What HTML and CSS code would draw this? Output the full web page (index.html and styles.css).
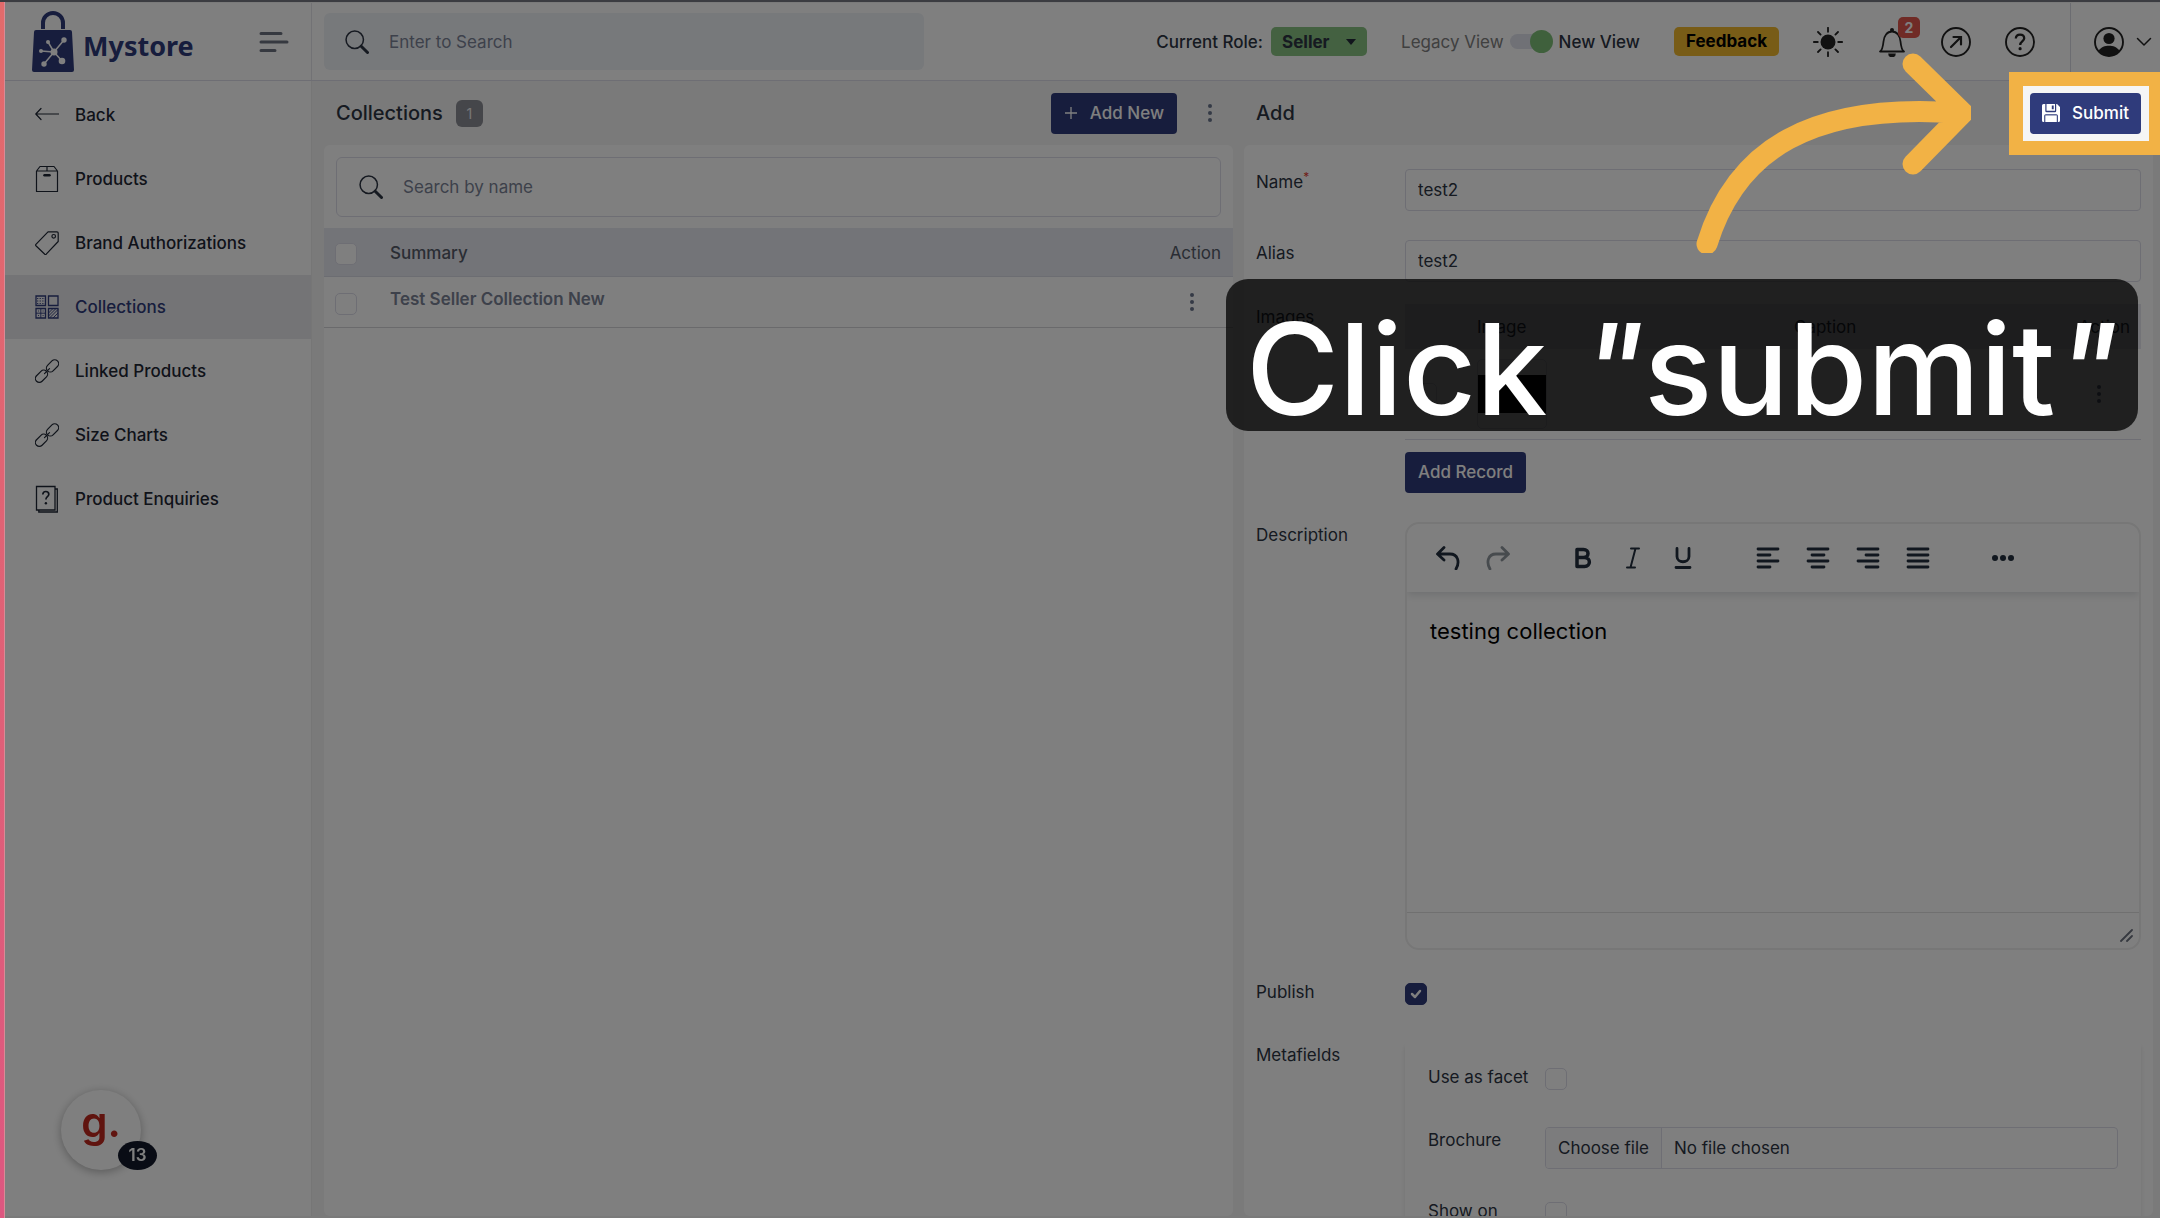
FILE: index.html
```html
<!DOCTYPE html>
<html lang="en">
<head>
    <meta charset="UTF-8">
    <meta name="viewport" content="width=device-width, initial-scale=1.0">
    <title>Mystore - Collections</title>
    <link rel="stylesheet" href="styles.css">
</head>
<body>
    <svg class="defs" aria-hidden="true">
        <symbol id="i-search" viewBox="0 0 16 16">
            <circle cx="6.5" cy="6.5" r="5.8" fill="none" stroke="currentColor"/>
            <path d="M10.8 10.8 15 15" fill="none" stroke="currentColor" stroke-width="2" stroke-linecap="round"/>
        </symbol>
        <symbol id="i-dots" viewBox="0 0 6 20">
            <circle cx="3" cy="3" r="2"/><circle cx="3" cy="10" r="2"/><circle cx="3" cy="17" r="2"/>
        </symbol>
        <symbol id="i-link" viewBox="0 0 24 24">
            <g fill="none" stroke="currentColor" stroke-width="1.2" stroke-linecap="round">
                <rect x="10.500" y="3" width="14" height="7.800" rx="3.900" transform="rotate(-45 17.500 6.900)"/>
                <rect x="-.5" y="13.400" width="14" height="7.800" rx="3.900" transform="rotate(-45 6.500 17.300)"/>
                <path d="m9.500 14.600 5-5"/>
            </g>
        </symbol>
    </svg>

    <header class="topbar">
        <div class="brand">
            <a href="#" class="logo">
                <svg width="44" height="62" viewBox="0 0 44 62" aria-hidden="true">
                    <path d="M12 18v-6a10 10 0 0 1 20 0v6" fill="none" stroke="#2f3b7b" stroke-width="4"/>
                    <path d="M5 19h34q2 0 2 2l2 38q0 2-2 2H3q-2 0-2-2l2-38q0-2 2-2z" fill="#2f3b7b"/>
                    <g stroke="#fff" stroke-width="1.500"><path d="M23 41 17 31M23 41 33 29M23 41 10 40M23 41 13 53M23 41 31 50"/></g>
                    <g fill="#fff"><circle cx="23" cy="41" r="3.500"/><circle cx="17" cy="31" r="2"/><circle cx="33" cy="29" r="2.700"/><circle cx="10" cy="40" r="2"/><circle cx="13" cy="53" r="2.700"/><circle cx="31" cy="50" r="3.300"/></g>
                </svg>
                <span>Mystore</span>
            </a>
            <button class="icon-btn menu-btn" aria-label="Toggle menu">
                <svg width="30" height="22" viewBox="0 0 30 22" stroke="currentColor" stroke-width="3" stroke-linecap="round"><path d="M2 2.500h20M2 11h26M2 19.500h14"/></svg>
            </button>
        </div>
        <div class="top-main">
            <label class="top-search">
                <svg width="24" height="24"><use href="#i-search"/></svg>
                <input type="text" placeholder="Enter to Search" aria-label="Enter to Search">
            </label>
            <div class="top-tools">
                <div class="role">
                    <label for="role">Current Role:</label>
                    <select id="role"><option>Seller</option></select>
                </div>
                <label class="view-switch">
                    <span class="legacy">Legacy View</span>
                    <input type="checkbox" class="switch" checked>
                    <span>New View</span>
                </label>
                <button class="feedback">Feedback</button>
                <div class="top-icons">
                    <button class="icon-btn" aria-label="Theme">
                        <svg width="30" height="30" viewBox="0 0 30 30"><circle cx="15" cy="15" r="7.500" fill="currentColor"/><path d="M15 .8v4M15 25.200v4M.8 15h4M25.200 15h4M5 5l2.600 2.600M22.400 22.400 25 25M5 25l2.600-2.600M22.400 7.600 25 5" stroke="currentColor" stroke-width="1.800" stroke-linecap="round"/></svg>
                    </button>
                    <button class="icon-btn bell" aria-label="Notifications">
                        <svg width="30" height="30" viewBox="0 0 30 30"><path d="M3 24.500h24c-2.500-1.500-3-5-3.500-10-.4-5.500-3.500-10-8.500-10s-8.100 4.500-8.500 10c-.5 5-1 8.500-3.500 10z" fill="none" stroke="currentColor" stroke-width="1.800" stroke-linejoin="round"/><path d="M11.200 26.500h7.600a3.800 3.800 0 0 1-7.600 0z" fill="currentColor"/><circle cx="15" cy="3" r="2" fill="currentColor"/></svg>
                        <span class="bell-count">2</span>
                    </button>
                    <button class="icon-btn" aria-label="Open store">
                        <svg width="30" height="30" viewBox="0 0 30 30" fill="none" stroke="currentColor" stroke-width="1.900" stroke-linecap="round"><circle cx="15" cy="15" r="14"/><path d="m10 20 9.500-9.500M12.500 10h7.500v7.500" stroke-width="2.200"/></svg>
                    </button>
                    <button class="icon-btn" aria-label="Help">
                        <svg width="30" height="30" viewBox="0 0 30 30" fill="none" stroke="currentColor" stroke-width="1.900"><circle cx="15" cy="15" r="14"/><path d="M10.800 11.500c.2-2.400 1.800-3.800 4.200-3.800s4.200 1.400 4.200 3.600c0 3.200-4 3.200-4 6.700" stroke-width="2.300"/><circle cx="15.100" cy="21.700" r="1.600" fill="currentColor" stroke="none"/></svg>
                    </button>
                </div>
            </div>
            <button class="icon-btn account" aria-label="Account">
                <svg width="30" height="30" viewBox="0 0 30 30"><circle cx="15" cy="15" r="14" fill="none" stroke="currentColor" stroke-width="1.900"/><circle cx="15" cy="11.500" r="5.600" fill="currentColor"/><path d="M4.500 24C7 20 11 18.800 15 18.800s8 1.200 10.500 5.200A14 14 0 0 1 15 29a14 14 0 0 1-10.500-5z" fill="currentColor"/></svg>
                <svg width="16" height="10" viewBox="0 0 16 10" fill="none" stroke="currentColor" stroke-width="1.500" stroke-linecap="round" stroke-linejoin="round"><path d="m1.500 1.500 6.500 6.500 6.500-6.500"/></svg>
            </button>
        </div>
    </header>

    <div class="layout">
        <nav class="sidebar">
            <a href="#"><svg width="24" height="24" viewBox="0 0 24 24" fill="none" stroke="currentColor" stroke-width="1.200" stroke-linecap="round" stroke-linejoin="round"><path d="M23.500 11H.8M6 5.500.8 11 6 16.500"/></svg>Back</a>
            <a href="#"><svg width="24" height="28" viewBox="0 0 24 28" fill="none" stroke="currentColor" stroke-width="1.200" stroke-linejoin="round"><path d="M1.500 6h21v20.500h-21zM1.500 6 5 1.500h14L22.500 6M12 1.500V6"/><path d="M9.500 10.200h5" stroke-width="2.500" stroke-linecap="round"/></svg>Products</a>
            <a href="#"><svg width="24" height="24" viewBox="0 0 24 24" fill="none" stroke="currentColor" stroke-width="1.200" stroke-linejoin="round"><path d="M13 .8h9q1.200 0 1.200 1.200v8.500L11.200 23.200q-.7.600-1.400 0L.9 14.700q-.6-.7 0-1.400z"/><circle cx="18.700" cy="5.300" r="1.800"/></svg>Brand Authorizations</a>
            <a href="#" class="active"><svg width="24" height="24" viewBox="0 0 24 24" fill="none" stroke="currentColor" stroke-width="1.300"><path d="M1 1h9.500v9.500H1zM13.500 1H23v9.500h-9.500zM1 13.500h9.500V23H1zM13.500 13.500H23V23h-9.500z"/><g stroke-width=".9"><path d="M2 3.500h8M2 6h8M2 8.500h8" stroke-dasharray="1.300 1.300"/><path d="M1 18.200h9.500M5.800 13.500V23M3 16h1M7.600 16h1M3 20.500h1M7.600 20.500h1M13.500 18l4.500-4.500M13.500 21l7.500-7.500M14.500 23l8.500-8.500M18 23l5-5"/></g></svg>Collections</a>
            <a href="#"><svg width="24" height="24"><use href="#i-link"/></svg>Linked Products</a>
            <a href="#"><svg width="24" height="24"><use href="#i-link"/></svg>Size Charts</a>
            <a href="#"><svg width="24" height="28" viewBox="0 0 24 28" fill="none" stroke="currentColor" stroke-width="1.300"><path d="M1.500 1.500h18.500v23.500H1.500zM20 4h2.300v23H3.800v-2"/><path d="M7.800 9.500c.1-1.900 1.200-3 3-3s3 1.100 3 2.700c0 2.500-2.900 2.600-2.900 5.300" stroke-width="1.700"/><circle cx="10.900" cy="18.300" r="1.200" fill="currentColor" stroke="none"/></svg>Product Enquiries</a>
        </nav>

        <main class="content">
            <section class="pane">
                <div class="pane-head">
                    <h1>Collections</h1>
                    <span class="count">1</span>
                    <button class="btn push"><svg width="14" height="14" viewBox="0 0 14 14" stroke="currentColor" stroke-width="1.300"><path d="M7 1v12M1 7h12"/></svg>Add New</button>
                    <button class="icon-btn dots" aria-label="More"><svg width="6" height="20" fill="currentColor"><use href="#i-dots"/></svg></button>
                </div>
                <div class="card">
                    <label class="list-search">
                        <svg width="24" height="24"><use href="#i-search"/></svg>
                        <input type="text" placeholder="Search by name" aria-label="Search by name">
                    </label>
                    <table class="list">
                        <thead>
                            <tr>
                                <th class="pick"><input type="checkbox" class="check" aria-label="Select all"></th>
                                <th>Summary</th>
                                <th class="act">Action</th>
                            </tr>
                        </thead>
                        <tbody>
                            <tr>
                                <td class="pick"><input type="checkbox" class="check" aria-label="Select row"></td>
                                <td class="name">Test Seller Collection New</td>
                                <td class="act"><button class="icon-btn dots" aria-label="Row actions"><svg width="6" height="20" fill="currentColor"><use href="#i-dots"/></svg></button></td>
                            </tr>
                        </tbody>
                    </table>
                </div>
            </section>

            <section class="pane">
                <div class="pane-head">
                    <h2>Add</h2>
                    <button class="btn push submit"><svg width="18" height="18" viewBox="0 0 18 18" fill="currentColor"><path d="M1.500 0h1.800v7q0 1.300 1.300 1.300h8.300q1.300 0 1.300-1.300V0h.8L18 3v13.500q0 1.500-1.500 1.500h-.6v-6.200q0-1.600-1.600-1.600H3.800q-1.600 0-1.600 1.600V18h-.7Q0 18 0 16.500v-15Q0 0 1.500 0z"/><path d="M4.500 0h8.500v6.800H4.500zm5.300 1.500v3.800h1.900V1.500z" fill-rule="evenodd"/><path d="M3.300 11.400h11.500V18H3.300z"/></svg>Submit</button>
                </div>
                <form class="card form">
                    <div class="row">
                        <label for="name">Name<sup>*</sup></label>
                        <input id="name" class="text" type="text" value="test2">
                    </div>
                    <div class="row tight">
                        <label for="alias">Alias</label>
                        <input id="alias" class="text" type="text" value="test2">
                    </div>
                    <div class="row">
                        <span class="label">Images</span>
                        <div>
                            <table class="images">
                                <thead>
                                    <tr><th class="pick"></th><th>Image</th><th>Caption</th><th class="act">Action</th></tr>
                                </thead>
                                <tbody>
                                    <tr>
                                        <td class="pick"><input type="checkbox" class="check" aria-label="Select image"></td>
                                        <td><div class="thumb"><div class="thumb-pic"></div></div></td>
                                        <td></td>
                                        <td class="act"><button type="button" class="icon-btn dots" aria-label="Image actions"><svg width="6" height="20" fill="currentColor"><use href="#i-dots"/></svg></button></td>
                                    </tr>
                                </tbody>
                            </table>
                            <button type="button" class="btn">Add Record</button>
                        </div>
                    </div>
                    <div class="row">
                        <label for="desc">Description</label>
                        <div class="editor">
                            <div class="toolbar">
                                <div class="group">
                                    <button type="button" aria-label="Undo"><svg width="24" height="24" viewBox="0 0 24 24"><path d="M8 1.500 1.500 8 8 14M1.800 8H14c8 0 10 8 6 15"/></svg></button>
                                    <button type="button" aria-label="Redo" disabled><svg width="24" height="24" viewBox="0 0 24 24"><path d="M16 1.500 22.500 8 16 14M22.200 8H10C2 8 0 16 4 23"/></svg></button>
                                </div>
                                <div class="group">
                                    <button type="button" aria-label="Bold"><svg width="20" height="22" viewBox="0 0 20 22"><path d="M4 2.500h6.500c6 0 6 8 0 8H4zM4 10.500h7.500c6.500 0 6.500 9 0 9H4z" stroke-width="3.500"/></svg></button>
                                    <button type="button" aria-label="Italic"><svg width="16" height="22" viewBox="0 0 16 22"><path d="M6 1.500h8M2 20.500h8M10.500 1.500 5.500 20.500" stroke-width="2"/></svg></button>
                                    <button type="button" aria-label="Underline"><svg width="18" height="22" viewBox="0 0 18 22"><path d="M3 1.500v8c0 7 12 7 12 0v-8M2 20.500h14"/></svg></button>
                                </div>
                                <div class="group">
                                    <button type="button" aria-label="Align left"><svg width="24" height="22" viewBox="0 0 24 22"><path d="M2 2h20M2 8h12M2 14h20M2 20h12"/></svg></button>
                                    <button type="button" aria-label="Align center"><svg width="24" height="22" viewBox="0 0 24 22"><path d="M2 2h20M6 8h12M2 14h20M6 20h12"/></svg></button>
                                    <button type="button" aria-label="Align right"><svg width="24" height="22" viewBox="0 0 24 22"><path d="M2 2h20M10 8h12M2 14h20M10 20h12"/></svg></button>
                                    <button type="button" aria-label="Justify"><svg width="24" height="22" viewBox="0 0 24 22"><path d="M2 2h20M2 8h20M2 14h20M2 20h20"/></svg></button>
                                </div>
                                <div class="group">
                                    <button type="button" aria-label="More"><svg width="24" height="8" viewBox="0 0 24 8"><path d="M4 4h.01M12 4h.01M20 4h.01" stroke-width="6"/></svg></button>
                                </div>
                            </div>
                            <textarea id="desc">testing collection</textarea>
                            <div class="statusbar"><svg width="14" height="14" viewBox="0 0 14 14" stroke="currentColor" stroke-width="1.800" stroke-linecap="round"><path d="M2 13 13 2M8 13l5-5"/></svg></div>
                        </div>
                    </div>
                    <div class="row loose">
                        <label for="publish">Publish</label>
                        <input id="publish" type="checkbox" class="check" checked>
                    </div>
                    <div class="row">
                        <span class="label">Metafields</span>
                        <div class="meta">
                            <div class="row loose">
                                <label for="facet">Use as facet</label>
                                <input id="facet" type="checkbox" class="check">
                            </div>
                            <div class="row">
                                <label for="brochure">Brochure</label>
                                <label class="file">
                                    <input id="brochure" type="file">
                                    <span class="file-btn">Choose file</span>
                                    <span class="file-name">No file chosen</span>
                                </label>
                            </div>
                            <div class="row">
                                <label for="showon">Show on</label>
                                <input id="showon" type="checkbox" class="check">
                            </div>
                        </div>
                    </div>
                </form>
            </section>
        </main>
    </div>

    <button class="chat" aria-label="Open chat">
        g.
        <span class="chat-count">13</span>
    </button>

    <!-- tour step: dims everything except the submit button -->
    <div class="spotlight"></div>
    <svg class="tour-arrow" width="280" height="208" viewBox="0 0 280 208" fill="none" stroke="#f2b245" stroke-width="21" stroke-linecap="round" stroke-linejoin="round" aria-hidden="true">
        <path d="M16 199C45 105 120 57 268 68M222 19l50 49-50 51"/>
    </svg>
    <div class="tour-text">Click <i>"</i>submit<i>"</i></div>
    <div class="edge"></div>
</body>
</html>
```
FILE: styles.css
```css
* {
    box-sizing: border-box;
}

body {
    margin: 0;
    height: 100vh;
    overflow: hidden;
    display: flex;
    flex-direction: column;
    padding: 3px 0 2px 4px;
    font-family: Inter, "Liberation Sans", sans-serif;
    font-size: 17px;
    line-height: 26px;
    color: #2c3443;
    background: #f5f5f5;
    position: relative;
}

button, input, select, textarea {
    font: inherit;
    color: inherit;
}

button {
    cursor: pointer;
}

svg {
    flex: none;
}

.defs {
    position: absolute;
    width: 0;
    height: 0;
}

.icon-btn {
    display: flex;
    align-items: center;
    padding: 0;
    border: none;
    background: none;
}

.dots {
    color: #69748c;
}

/* header */
.topbar {
    display: flex;
    flex: none;
    height: 78px;
    background: white;
    border-bottom: 1px solid #dcdce8;
}

.brand {
    display: flex;
    align-items: center;
    justify-content: space-between;
    width: 308px;
    padding: 0 22px 0 27px;
    border-right: 1px solid #e4e4ea;
}

.logo {
    display: flex;
    align-items: center;
    gap: 8px;
    color: #2f3b7b;
    font-family: "Noto Sans", sans-serif;
    font-size: 27px;
    font-weight: 700;
    text-decoration: none;
}

.logo span {
    padding-top: 8px;
}

.menu-btn {
    color: #6d7280;
}

.top-main {
    display: flex;
    flex: 1;
    align-items: center;
    padding-left: 12px;
}

.top-search {
    display: flex;
    align-items: center;
    gap: 20px;
    width: 600px;
    height: 57px;
    padding: 0 21px;
    border-radius: 6px;
    background: #eff2f6;
}

.top-search input, .list-search input {
    flex: 1;
    border: none;
    background: none;
    padding: 0;
    outline: none;
}

input::placeholder {
    color: #7b8396;
    opacity: 1;
}

.top-tools {
    display: flex;
    align-items: center;
    justify-content: flex-end;
    gap: 34px;
    flex: 1;
    padding-right: 35px;
    font-weight: 500;
}

.role {
    display: flex;
    align-items: center;
    gap: 8px;
}

.role select {
    appearance: none;
    width: 96px;
    height: 29px;
    padding: 0 11px;
    border: none;
    border-radius: 5px;
    font-weight: 700;
    background: #89c282 url("data:image/svg+xml,%3Csvg xmlns='http://www.w3.org/2000/svg' width='10' height='6'%3E%3Cpath d='M0 0h10L5 6z' fill='%23222a38'/%3E%3C/svg%3E") no-repeat right 11px center;
}

.view-switch {
    display: flex;
    align-items: center;
    gap: 6px;
}

.legacy {
    color: #808080;
    font-weight: 400;
}

.switch {
    appearance: none;
    width: 43px;
    height: 15px;
    margin: 0;
    border-radius: 8px;
    background: linear-gradient(to right, #e0e2ec 36px, transparent 36px);
    display: flex;
    align-items: center;
    justify-content: flex-end;
}

.switch::after {
    content: "";
    width: 23px;
    height: 23px;
    flex: none;
    border-radius: 50%;
    background: #7fc079;
}

.feedback {
    height: 29px;
    padding: 0 12px;
    border: none;
    border-radius: 5px;
    background: #f0b92f;
    color: black;
    font-weight: 700;
    line-height: 29px;
}

.top-icons {
    display: flex;
    gap: 34px;
}

.bell {
    position: relative;
}

.bell-count {
    position: absolute;
    top: -10px;
    left: 21px;
    width: 22px;
    height: 21px;
    border-radius: 5px;
    background: #e0564c;
    color: white;
    font-size: 14px;
    font-weight: 700;
    line-height: 21px;
}

.account {
    align-self: stretch;
    gap: 12px;
    padding: 0 8px 0 23px;
    border-left: 1px solid #d6d8e2;
}

.top-icons, .account {
    color: #222222;
}

/* sidebar */
.layout {
    display: flex;
    flex: 1;
    min-height: 0;
}

.sidebar {
    width: 308px;
    flex: none;
    padding-top: 2px;
    background: white;
    border-right: 1px solid #ececec;
}

.sidebar a {
    display: flex;
    align-items: center;
    gap: 16px;
    height: 64px;
    padding-left: 31px;
    color: #1f2735;
    font-weight: 500;
    text-decoration: none;
}

.sidebar a.active {
    background: #e8e8ec;
    color: #2f3b7b;
}

/* panes */
.content {
    display: flex;
    flex: 1;
    gap: 11px;
    padding: 0 7px 0 12px;
}

.pane {
    display: flex;
    flex-direction: column;
    flex: 1;
    min-width: 0;
}

.pane-head {
    display: flex;
    align-items: center;
    flex: none;
    height: 64px;
    padding: 0 12px;
}

.pane-head h1, .pane-head h2 {
    margin: 0;
    font-size: 20px;
    font-weight: 500;
}

.count {
    width: 27px;
    height: 27px;
    margin-left: 13px;
    border-radius: 6px;
    background: #8b8c94;
    color: #eeeeee;
    font-size: 14px;
    line-height: 27px;
    text-align: center;
}

.push {
    margin-left: auto;
}

.pane-head .dots {
    margin: 0 8px 0 30px;
}

.btn {
    display: flex;
    align-items: center;
    gap: 12px;
    height: 41px;
    padding: 0 13px;
    border: none;
    border-radius: 4px;
    background: #2f3b7b;
    color: white;
    font-weight: 500;
}

.btn.submit {
    padding: 0 12px;
}

.card {
    flex: 1;
    min-height: 0;
    overflow: hidden;
    border-radius: 6px;
    background: white;
}

/* collection list */
.list-search {
    display: flex;
    align-items: center;
    gap: 20px;
    height: 60px;
    margin: 12px 12px 11px;
    padding: 0 22px;
    border: 1px solid #dcdce8;
    border-radius: 6px;
}

table {
    width: 100%;
    border-collapse: collapse;
}

th, td {
    padding: 0;
    text-align: left;
    font-weight: 400;
}

.list th {
    height: 48px;
    padding-top: 2px;
    background: #e6e8f0;
    border-bottom: 1px solid #d8dae4;
    color: #555b68;
    font-weight: 500;
}

.list th:last-child {
    font-weight: 400;
}

.list td {
    height: 51px;
    border-bottom: 1px solid #d4d4d8;
}

.list .pick {
    width: 66px;
    padding: 4px 0 0 11px;
}

.list .name {
    padding-bottom: 6px;
    color: #7b8396;
    font-weight: 600;
}

.list .act {
    width: 90px;
    padding-right: 12px;
    text-align: right;
}

.list td .dots {
    margin-left: 46px;
}

.check {
    appearance: none;
    display: block;
    width: 22px;
    height: 22px;
    margin: 0;
    border: 1px solid #dcdce8;
    border-radius: 5px;
    background: white;
}

.check:checked {
    border-color: #2f3b7b;
    background: #2f3b7b url("data:image/svg+xml,%3Csvg xmlns='http://www.w3.org/2000/svg' width='12' height='10'%3E%3Cpath d='M2 5l3 3 5-6' fill='none' stroke='white' stroke-width='2.500' stroke-linecap='round' stroke-linejoin='round'/%3E%3C/svg%3E") no-repeat center;
}

/* add form */
.form {
    padding: 24px 12px 0;
}

.row {
    display: grid;
    grid-template-columns: 149px 1fr;
    align-items: start;
    margin-bottom: 29px;
}

.row.tight {
    margin-bottom: 22px;
}

.row.loose {
    margin-bottom: 37px;
}

.row > .check {
    margin-top: 4px;
}

.row sup {
    color: #e03c31;
    font-size: 12px;
    line-height: 0;
}

.text {
    width: 100%;
    height: 42px;
    padding: 0 12px;
    border: 1px solid #dcdce8;
    border-radius: 4px;
    background: white;
}

.images {
    margin-bottom: 12px;
}

.images th {
    height: 45px;
    background: #e6e6ee;
}

.images td {
    height: 90px;
    border-bottom: 1px solid #dcdce8;
}

.images .pick {
    width: 72px;
    padding-left: 10px;
}

.images .act {
    width: 120px;
    padding-right: 11px;
    text-align: right;
}

.images td .dots {
    margin-left: 75px;
}

.thumb {
    display: flex;
    align-items: center;
    width: 70px;
    height: 70px;
    border: 1px solid #dcdce8;
    border-radius: 5px;
}

.thumb-pic {
    flex: 1;
    height: 38px;
    background: black;
}

.images th:nth-child(2) {
    width: 317px;
}

.editor {
    display: flex;
    flex-direction: column;
    height: 428px;
    overflow: hidden;
    border: 2px solid #eeeeee;
    border-radius: 14px;
}

.toolbar {
    display: flex;
    gap: 35px;
    flex: none;
    height: 68px;
    padding-left: 16px;
    box-shadow: 0 3px 8px rgba(34, 47, 62, 0.15);
}

.group {
    display: flex;
}

.group button {
    display: flex;
    align-items: center;
    justify-content: center;
    width: 50px;
    padding: 0;
    border: none;
    background: none;
    color: #222f3e;
}

.group button:disabled {
    opacity: 0.5;
}

.group svg {
    fill: none;
    stroke: currentColor;
    stroke-width: 2.800;
    stroke-linecap: round;
    stroke-linejoin: round;
}

.editor textarea {
    flex: 1;
    padding: 26px 23px;
    border: none;
    outline: none;
    resize: none;
    background: none;
    color: black;
    font-size: 22px;
}

.statusbar {
    display: flex;
    align-items: flex-end;
    justify-content: flex-end;
    height: 36px;
    padding: 6px;
    border-top: 1px solid #e0e0e0;
    color: #6d7280;
}

.meta {
    padding: 22px 23px 0;
    border-radius: 4px;
    box-shadow: 0 4px 5px rgba(0, 0, 0, 0.1);
}

.meta .row {
    grid-template-columns: 117px 1fr;
}

.file {
    display: flex;
    height: 42px;
    overflow: hidden;
    border: 1px solid #dcdce8;
    border-radius: 4px;
    line-height: 40px;
    position: relative;
}

.file input {
    position: absolute;
    opacity: 0;
}

.file-btn {
    padding: 0 12px;
    border-right: 1px solid #dcdce8;
    background: #f8f8fa;
}

.file-name {
    padding: 0 12px;
}

/* chat bubble */
.chat {
    position: fixed;
    left: 61px;
    bottom: 48px;
    width: 80px;
    height: 80px;
    padding: 0 0 16px;
    border: none;
    border-radius: 50%;
    background: white;
    box-shadow: 0 2px 10px rgba(0, 0, 0, 0.3);
    color: #c0281e;
    font-family: Inter, sans-serif;
    font-size: 42px;
    font-weight: 600;
    line-height: 60px;
}

.chat-count {
    position: absolute;
    right: -16px;
    bottom: 0;
    width: 39px;
    height: 29px;
    border-radius: 50%;
    background: #12182a;
    color: white;
    font-size: 17px;
    line-height: 29px;
}

/* tour */
.spotlight {
    position: fixed;
    top: 86px;
    right: 11px;
    width: 126px;
    height: 55px;
    outline: 14px solid #f2b245;
    box-shadow: 0 0 0 3000px rgba(0, 0, 0, 0.5);
}

.tour-arrow {
    position: fixed;
    top: 45px;
    right: 189px;
}

.tour-text {
    position: fixed;
    top: 279px;
    right: 22px;
    width: 912px;
    height: 152px;
    border-radius: 22px;
    background: rgba(0, 0, 0, 0.75);
    color: white;
    font-size: 127px;
    font-weight: 500;
    line-height: 180px;
    text-align: center;
    white-space: nowrap;
}

.edge {
    position: fixed;
    inset: 0;
    pointer-events: none;
    border-top: 2px solid #3b3c41;
}

.edge::before {
    content: "";
    position: absolute;
    inset: 0 auto 0 0;
    width: 4px;
    background: linear-gradient(#e26b6b, #dd5780);
    border-right: 1px solid #d98a96;
}
```
